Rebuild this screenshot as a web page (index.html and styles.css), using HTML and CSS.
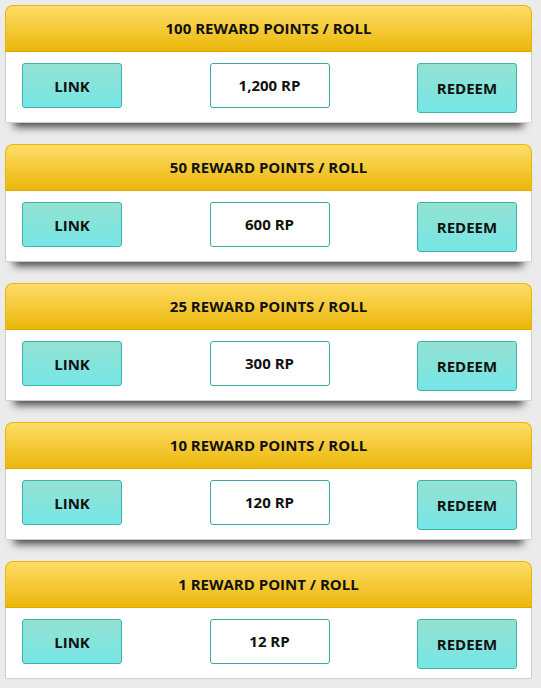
FILE: index.html
```html
<!DOCTYPE html>
<html lang="en">
<head>
  <meta charset="UTF-8" />
  <title>Reward Points</title>
  <link rel="stylesheet" href="styles.css">
</head>
<body>
  <div class="reward-list">
    <div class="reward-card">
      <div class="reward-head">100 REWARD POINTS / ROLL</div>
      <div class="reward-body">
        <button class="btn">LINK</button>
        <div class="cost">1,200 RP</div>
        <button class="btn redeem">REDEEM</button>
      </div>
    </div>
    <div class="reward-card">
      <div class="reward-head">50 REWARD POINTS / ROLL</div>
      <div class="reward-body">
        <button class="btn">LINK</button>
        <div class="cost">600 RP</div>
        <button class="btn redeem">REDEEM</button>
      </div>
    </div>
    <div class="reward-card">
      <div class="reward-head">25 REWARD POINTS / ROLL</div>
      <div class="reward-body">
        <button class="btn">LINK</button>
        <div class="cost">300 RP</div>
        <button class="btn redeem">REDEEM</button>
      </div>
    </div>
    <div class="reward-card">
      <div class="reward-head">10 REWARD POINTS / ROLL</div>
      <div class="reward-body">
        <button class="btn">LINK</button>
        <div class="cost">120 RP</div>
        <button class="btn redeem">REDEEM</button>
      </div>
    </div>
    <div class="reward-card">
      <div class="reward-head">1 REWARD POINT / ROLL</div>
      <div class="reward-body">
        <button class="btn">LINK</button>
        <div class="cost">12 RP</div>
        <button class="btn redeem">REDEEM</button>
      </div>
    </div>
  </div>
</body>
</html>
```

FILE: styles.css
```css
body {
  margin: 0;
  background-color: #ebebeb;
  font-family: "Open Sans", Arial, sans-serif;
  font-weight: bold;
  color: #111;
}
.reward-list {
  display: flex;
  flex-direction: column;
  gap: 21px;
  padding: 5px 0 0 5px;
  width: 527px;
}
.reward-card {
  background: #fff;
  border-radius: 8px 8px 2px 2px;
  box-shadow: 0 13px 8px -9px rgba(0,0,0,0.7);
}
.reward-head {
  height: 45px;
  line-height: 45px;
  text-align: center;
  font-size: 15px;
  background: linear-gradient(#fedd68, #ebb70a);
  border: 1px solid #e5b50c;
  border-bottom-color: #dca900;
  border-radius: 8px 8px 0 0;
}
.reward-body {
  height: 71px;
  box-sizing: border-box;
  display: flex;
  justify-content: space-between;
  align-items: flex-start;
  padding: 11px 14px 0 16px;
  border: 1px solid #cfcfcf;
  border-top: none;
  border-radius: 0 0 2px 2px;
}
.btn {
  width: 100px;
  height: 45px;
  padding: 0;
  font-family: inherit;
  font-weight: bold;
  font-size: 15px;
  color: #111;
  background: linear-gradient(#94e2d2, #76e6e6);
  border: 1px solid #3db2ac;
  border-radius: 3px;
}
.btn.redeem {
  height: 50px;
}
.cost {
  width: 120px;
  height: 45px;
  box-sizing: border-box;
  line-height: 43px;
  text-align: center;
  font-size: 15px;
  border: 1px solid #3aa9a6;
  border-radius: 3px;
  background: #fff;
}
```
